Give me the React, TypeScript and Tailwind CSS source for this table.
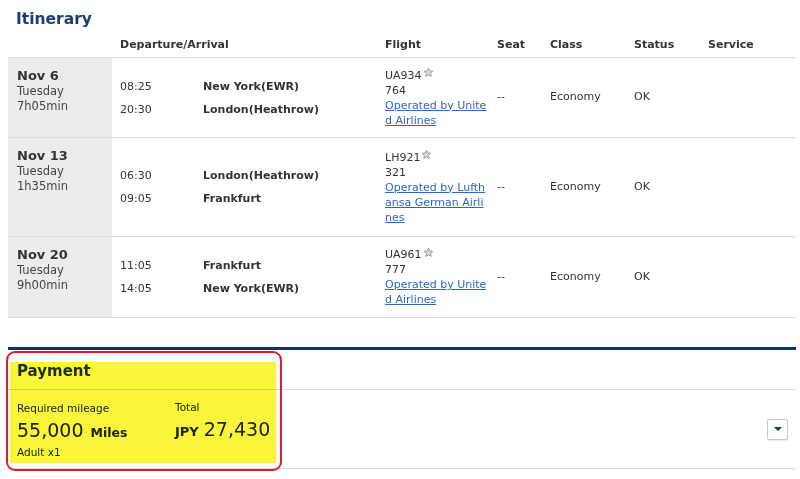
import React from 'react'

type Leg = {
  date: string
  day: string
  duration: string
  dep: [string, string]
  arr: [string, string]
  flight: string
  aircraft: string
  operated: string[]
  height: string
}

const legs: Leg[] = [
  {
    date: 'Nov 6',
    day: 'Tuesday',
    duration: '7h05min',
    dep: ['08:25', 'New York(EWR)'],
    arr: ['20:30', 'London(Heathrow)'],
    flight: 'UA934',
    aircraft: '764',
    operated: ['Operated by Unite', 'd Airlines'],
    height: 'h-[80px]',
  },
  {
    date: 'Nov 13',
    day: 'Tuesday',
    duration: '1h35min',
    dep: ['06:30', 'London(Heathrow)'],
    arr: ['09:05', 'Frankfurt'],
    flight: 'LH921',
    aircraft: '321',
    operated: ['Operated by Lufth', 'ansa German Airli', 'nes'],
    height: 'h-[99px]',
  },
  {
    date: 'Nov 20',
    day: 'Tuesday',
    duration: '9h00min',
    dep: ['11:05', 'Frankfurt'],
    arr: ['14:05', 'New York(EWR)'],
    flight: 'UA961',
    aircraft: '777',
    operated: ['Operated by Unite', 'd Airlines'],
    height: 'h-[81px]',
  },
]

function Star() {
  return (
    <svg width="11" height="11" viewBox="0 0 24 24" className="-mt-[6px] ml-[1px] inline-block align-middle">
      <path
        d="M12 2.5l2.9 6.1 6.6.8-4.9 4.6 1.3 6.6L12 17.3l-5.9 3.3 1.3-6.6-4.9-4.6 6.6-.8z"
        fill="#d6d6d6"
        stroke="#9a9a9a"
        strokeWidth="2"
        strokeLinejoin="round"
      />
    </svg>
  )
}

function LegRow({ leg }: { leg: Leg }) {
  return (
    <div className={`flex border-b border-[#dcdcdc] ${leg.height}`}>
      <div className="w-[104px] shrink-0 bg-[#ececec] pl-[9px] pt-[9px] text-[11.5px] leading-[15px] text-[#444]">
        <div className="text-[13px] font-bold leading-[17px] text-[#333]">{leg.date}</div>
        <div>{leg.day}</div>
        <div>{leg.duration}</div>
      </div>
      <div className="flex w-[273px] shrink-0 flex-col justify-center gap-[8px] pl-2 text-[11px] leading-[15px] text-[#333]">
        {[leg.dep, leg.arr].map(([t, c]) => (
          <div key={t} className="flex">
            <span className="w-[83px]">{t}</span>
            <span className="font-bold">{c}</span>
          </div>
        ))}
      </div>
      <div className="flex w-[112px] shrink-0 flex-col justify-center text-[11px] leading-[15px] text-[#333]">
        <div>
          {leg.flight}
          <Star />
        </div>
        <div>{leg.aircraft}</div>
        {leg.operated.map((l) => (
          <a key={l} href="#" className="text-[#2a68c8] underline">
            {l}
          </a>
        ))}
      </div>
      <div className="flex w-[53px] shrink-0 items-center text-[11px] text-[#333]">--</div>
      <div className="flex w-[84px] shrink-0 items-center text-[11px] text-[#333]">Economy</div>
      <div className="flex w-[74px] shrink-0 items-center text-[11px] text-[#333]">OK</div>
      <div className="flex-1" />
    </div>
  )
}

export default function App() {
  return (
    <div
      className="h-[479px] w-[800px] overflow-hidden bg-white px-2"
      style={{ fontFamily: '"DejaVu Sans", Verdana, sans-serif' }}
    >
      <h1 className="h-[31px] pl-2 pt-[8px] text-[15.5px] font-bold leading-[22px] text-[#1d3e70]">Itinerary</h1>

      <div className="w-[788px]">
        <div className="flex h-[27px] items-center border-b border-[#dcdcdc] pt-[3px] text-[11px] font-bold text-[#333]">
          <div className="w-[104px] shrink-0" />
          <div className="w-[273px] shrink-0 pl-2">Departure/Arrival</div>
          <div className="w-[112px] shrink-0">Flight</div>
          <div className="w-[53px] shrink-0">Seat</div>
          <div className="w-[84px] shrink-0">Class</div>
          <div className="w-[74px] shrink-0">Status</div>
          <div className="flex-1">Service</div>
        </div>
        {legs.map((leg) => (
          <LegRow key={leg.date} leg={leg} />
        ))}

        <div className="relative mt-[29px] border-t-[3px] border-[#12325f]">
          <div className="flex h-[40px] items-center border-b border-[#dcdcdc] pl-[9px] pt-[3px]">
            <h2 className="text-[15px] font-bold text-[#1f2f48]">Payment</h2>
          </div>
          <div className="flex h-[79px] items-center border-b border-[#dcdcdc] pl-[9px] pr-[8px] text-[#222]">
            <div className="w-[158px] pt-[1px]">
              <div className="text-[10.5px] leading-[14px]">Required mileage</div>
              <div className="mt-[3px] flex items-baseline gap-[7px] leading-[24px]">
                <span className="text-[19px]">55,000</span>
                <span className="text-[12.5px] font-bold">Miles</span>
              </div>
              <div className="text-[10.5px] leading-[14px]">Adult x1</div>
            </div>
            <div className="-mt-[14px]">
              <div className="text-[10.5px] leading-[14px]">Total</div>
              <div className="mt-[3px] flex items-baseline gap-[5px] leading-[24px]">
                <span className="text-[13px] font-bold">JPY</span>
                <span className="text-[19px]">27,430</span>
              </div>
            </div>
            <div className="flex-1" />
            <button className="flex h-[21px] w-[21px] items-center justify-center rounded-[2px] border border-[#c8c8c8] bg-white shadow-[0_1px_1px_rgba(0,0,0,0.08)]">
              <span className="h-0 w-0 border-x-[4px] border-t-[4px] border-x-transparent border-t-[#17335e]" />
            </button>
          </div>

          <div className="pointer-events-none absolute left-[2px] top-[12px] h-[101px] w-[266px] bg-[#f8f53a] mix-blend-multiply" />
          <div className="pointer-events-none absolute left-[-2px] top-[1px] h-[120px] w-[276px] rounded-[9px] border-2 border-[#e01f2b]" />
        </div>
      </div>
    </div>
  )
}
